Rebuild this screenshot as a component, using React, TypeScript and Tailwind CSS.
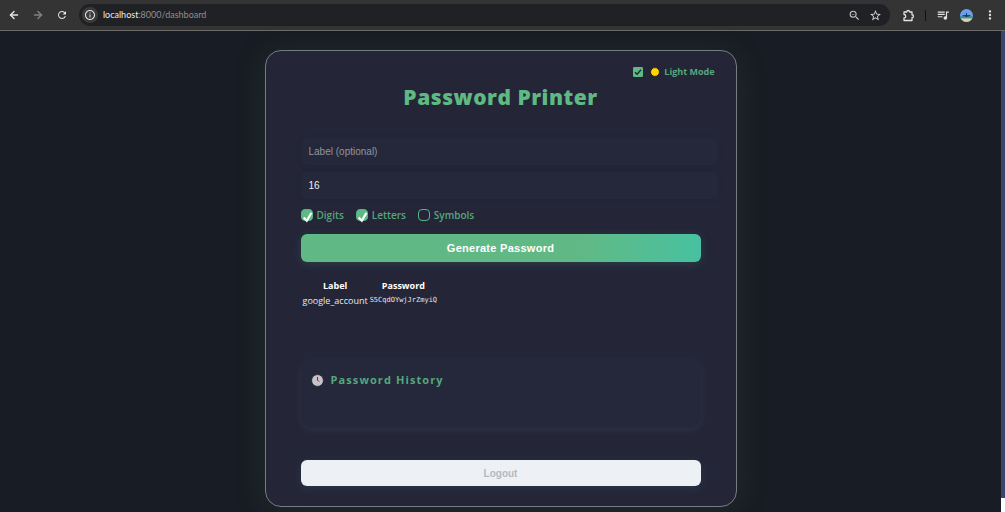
import { useState } from "react";
import { ArrowLeft, ArrowRight } from "lucide-react";
import {
  MdInfoOutline,
  MdMoreVert,
  MdQueueMusic,
  MdRefresh,
  MdStarBorder,
  MdZoomOut,
} from "react-icons/md";

interface HistoryEntry {
  label: string;
  password: string;
}

const entries: HistoryEntry[] = [
  { label: "google_account", password: "S5CqdOYwjJrZmyiQ" },
];

function BrowserBar() {
  return (
    <header className="flex h-[31px] shrink-0 items-center border-b border-[#6a6a6a] bg-[#343434] text-[#e3e3e3]">
      <div className="flex items-center gap-3 pl-2">
        <button aria-label="Back">
          <ArrowLeft size={12} strokeWidth={3} />
        </button>
        <button aria-label="Forward" className="text-[#808080]">
          <ArrowRight size={12} strokeWidth={3} />
        </button>
        <button aria-label="Reload">
          <MdRefresh size={12} />
        </button>
      </div>
      <div className="ml-[11px] flex h-[22px] flex-1 items-center rounded-full bg-[#202124] pr-2">
        <button
          aria-label="Site information"
          className="ml-[3px] flex size-4 items-center justify-center rounded-full bg-[#3a3a3a]"
        >
          <MdInfoOutline size={12} />
        </button>
        <span className="ml-[5px] flex-1 font-['Lato',sans-serif] text-[9px] text-[#8f8f8f]">
          <span className="text-[#ececec]">localhost</span>:8000/dashboard
        </span>
        <button aria-label="Zoom" className="text-[#c8c8c8]">
          <MdZoomOut size={13} />
        </button>
        <button aria-label="Bookmark" className="ml-2 text-[#d8d8d8]">
          <MdStarBorder size={13} />
        </button>
      </div>
      <div className="flex items-center pr-2 pl-3">
        <button aria-label="Extensions">
          <svg viewBox="0 0 26 26" className="size-[13px]">
            <path
              d="M4 6h5.5a3 3 0 0 1 6 0H20v5.5a3 3 0 0 1 0 6V23H4v-5a3.2 3.2 0 0 0 0-7z"
              fill="none"
              stroke="currentColor"
              strokeWidth="2.6"
              strokeLinejoin="round"
            />
          </svg>
        </button>
        <span className="mx-[10px] h-[11px] w-px bg-[#101010]" />
        <button aria-label="Media">
          <MdQueueMusic size={14} />
        </button>
        <button aria-label="Profile" className="ml-[10px]">
          <svg viewBox="0 0 26 26" className="size-[13px]">
            <clipPath id="avatar">
              <circle cx="13" cy="13" r="13" />
            </clipPath>
            <g clipPath="url(#avatar)">
              <rect width="26" height="26" fill="#6ba0f0" />
              <rect y="14" width="26" height="5" fill="#3f8fa0" />
              <rect y="19" width="26" height="7" fill="#d8d3a0" />
              <path d="M4 12h18l-4 3H8z" fill="#25406b" />
              <path d="M12 8h2v8h-2z" fill="#1d2f50" />
            </g>
          </svg>
        </button>
        <button aria-label="Menu" className="ml-[10px]">
          <MdMoreVert size={14} />
        </button>
      </div>
    </header>
  );
}

interface OptionProps {
  label: string;
  checked: boolean;
  onChange: (checked: boolean) => void;
}

function Option({ label, checked, onChange }: OptionProps) {
  return (
    <label className="flex items-center gap-1">
      <span className="relative flex">
        <input
          type="checkbox"
          checked={checked}
          onChange={(e) => onChange(e.target.checked)}
          className="size-3 appearance-none rounded-[4px] border border-[#58b488] checked:bg-[#5fb983]"
        />
        {checked && (
          <svg
            viewBox="0 0 12 14"
            className="pointer-events-none absolute top-0 left-0 h-[14px] w-3"
          >
            <path
              d="M2.7 8.5l3.1 3.2 4.7-7.9"
              fill="none"
              stroke="#fff"
              strokeWidth="2.2"
            />
          </svg>
        )}
      </span>
      {label}
    </label>
  );
}

export default function App() {
  const [lightMode, setLightMode] = useState(true);
  const [label, setLabel] = useState("");
  const [length, setLength] = useState("16");
  const [digits, setDigits] = useState(true);
  const [letters, setLetters] = useState(true);
  const [symbols, setSymbols] = useState(false);

  return (
    <div className="flex h-screen flex-col overflow-hidden bg-[#181c24] font-['Open_Sans',sans-serif]">
      <BrowserBar />

      <div className="flex min-h-0 flex-1">
        <main className="flex-1 px-4 pt-[19px]">
          <div className="mx-auto max-w-[472px] rounded-2xl border border-[#777b84] bg-[#242638] px-[35px] pt-3 pb-5 text-[#55a77d] shadow-[0_4px_32px_rgba(66,120,80,0.2)]">
            <div className="-mr-[14px] flex justify-end">
              <label className="flex h-[18px] items-center text-[9px] font-bold">
                <span className="relative mr-[7px] flex">
                  <input
                    type="checkbox"
                    checked={lightMode}
                    onChange={(e) => setLightMode(e.target.checked)}
                    className="size-[10px] appearance-none rounded-[1px] border border-[#5fb983] checked:bg-[#5fb983]"
                  />
                  {lightMode && (
                    <svg
                      viewBox="0 0 10 10"
                      className="pointer-events-none absolute inset-0"
                    >
                      <path
                        d="M2 5.2l2.1 2.1L8 2.8"
                        fill="none"
                        stroke="#242638"
                        strokeWidth="1.4"
                      />
                    </svg>
                  )}
                </span>
                <svg viewBox="0 0 10 10" className="mr-1 size-[10px]">
                  <circle
                    cx="5"
                    cy="5"
                    r="4.4"
                    fill="#ffd400"
                    stroke="#1b1b1b"
                    strokeWidth="0.8"
                  />
                </svg>
                Light Mode
              </label>
            </div>

            <h1 className="text-center text-[21px] leading-8 font-extrabold tracking-wide text-[#5fb983]">
              Password Printer
            </h1>

            <form className="mt-[25px]" onSubmit={(e) => e.preventDefault()}>
              <div className="-mr-[17px] flex flex-col gap-[7px] font-['Liberation_Sans',sans-serif] text-[10px]">
                <input
                  type="text"
                  aria-label="Label"
                  placeholder="Label (optional)"
                  value={label}
                  onChange={(e) => setLabel(e.target.value)}
                  className="h-[27px] rounded-md bg-[#24283a] px-2 text-[#eceff4] shadow-[0_1px_4px_rgba(30,34,48,0.3)] outline-none placeholder:text-[#93969d]"
                />
                <input
                  type="text"
                  inputMode="numeric"
                  aria-label="Length"
                  value={length}
                  onChange={(e) => setLength(e.target.value)}
                  className="h-[27px] rounded-md bg-[#24283a] px-2 text-[#eceff4] shadow-[0_1px_4px_rgba(30,34,48,0.3)] outline-none"
                />
              </div>

              <div className="mt-2 flex h-4 items-center gap-3 text-[10px] font-semibold">
                <Option label="Digits" checked={digits} onChange={setDigits} />
                <Option label="Letters" checked={letters} onChange={setLetters} />
                <Option label="Symbols" checked={symbols} onChange={setSymbols} />
              </div>

              <button
                type="submit"
                className="mt-[11px] h-7 w-full rounded-md bg-linear-to-r from-[#60b985] from-70% to-[#47c1a0] font-['Liberation_Sans',sans-serif] text-[11px] font-bold tracking-wide text-white shadow-[0_2px_8px_rgba(72,130,120,0.25)]"
              >
                Generate Password
              </button>
            </form>

            <table className="mt-4 border-separate border-spacing-x-[2px] border-spacing-y-0 text-[9px] text-[#e6e8ee]">
              <thead>
                <tr className="h-[15px]">
                  <th className="font-bold text-white">Label</th>
                  <th className="font-bold text-white">Password</th>
                </tr>
              </thead>
              <tbody>
                {entries.map((entry) => (
                  <tr key={entry.label} className="h-[15px]">
                    <td>{entry.label}</td>
                    <td className="font-['DejaVu_Sans_Mono',monospace] text-[7px]">
                      {entry.password}
                    </td>
                  </tr>
                ))}
              </tbody>
            </table>

            <section className="mt-[52px] h-[68px] rounded-xl bg-[#24283a] px-[10px] pt-3 shadow-[0_2px_10px_rgba(255,255,255,0.06)]">
              <h2 className="flex items-center gap-[7px] text-[11px] leading-4 font-bold tracking-widest">
                <svg viewBox="0 0 26 26" className="size-[13px]">
                  <circle
                    cx="13"
                    cy="13"
                    r="11.8"
                    fill="#c6c4ca"
                    stroke="#1c1c24"
                    strokeWidth="1.5"
                  />
                  <path d="M13 6v7" stroke="#3a3a40" strokeWidth="2" />
                  <path d="M13 12l4 4" stroke="#b8474f" strokeWidth="2" />
                </svg>
                Password History
              </h2>
            </section>

            <button className="mt-8 h-[26px] w-full rounded-md bg-[#edf1f5] font-['Liberation_Sans',sans-serif] text-[10px] font-bold text-[#b5babf] shadow-[0_2px_8px_rgba(72,130,140,0.2)]">
              Logout
            </button>
          </div>
        </main>

        {/* scroll track */}
        <div className="flex w-1 flex-col bg-[#39456a]" aria-hidden="true">
          <div className="mt-auto h-[14px] bg-white" />
        </div>
      </div>
    </div>
  );
}
